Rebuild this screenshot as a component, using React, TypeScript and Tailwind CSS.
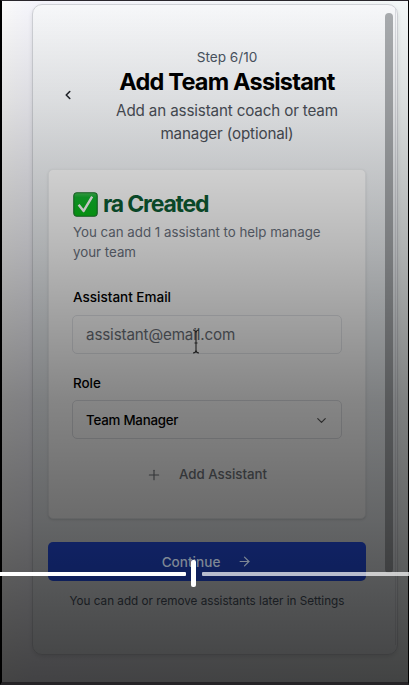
import React from "react";
import { ArrowRight, ChevronDown, ChevronLeft, Plus } from "lucide-react";

function CheckEmoji() {
  return (
    <svg width="25" height="25" viewBox="0 0 24 24" className="shrink-0">
      <defs>
        <linearGradient id="check-fill" x1="0" y1="0" x2="0" y2="1">
          <stop offset="0" stopColor="#45bf55" />
          <stop offset="0.2" stopColor="#12b52e" />
          <stop offset="1" stopColor="#08bd16" />
        </linearGradient>
      </defs>
      <rect x="0.75" y="0.75" width="22.5" height="22.5" rx="3" fill="url(#check-fill)" stroke="#1c7a2b" strokeWidth="1.1" />
      <path d="M5.4 12.2 10.2 18.2 18.4 4.4" fill="none" stroke="#fff" strokeWidth="2.3" strokeLinejoin="round" />
    </svg>
  );
}

function Header() {
  return (
    <header className="flex h-[164px] items-start">
      <div className="flex w-10 justify-center pt-[83px]">
        <ChevronLeft size={14} strokeWidth={2.8} className="text-[#22262b]" />
      </div>
      <div className="flex-1 pt-[42px] text-center">
        <p className="text-[13.6px] leading-5 text-[#4b5563]">Step 6/10</p>
        <h1 className="mt-[-1px] text-[23.5px] leading-8 font-bold tracking-[-0.8px] text-black">Add Team Assistant</h1>
        <p className="mt-px text-[15.2px] leading-[23px] tracking-[-0.15px] text-[#4b5058]">
          Add an assistant coach or team
          <br />
          manager (optional)
        </p>
      </div>
    </header>
  );
}

function AssistantCard() {
  return (
    <section className="h-[350px] rounded-[5px] border border-[#eceef0] bg-white px-[24px] pt-[22px] shadow-sm">
      <h2 className="flex h-6 items-center gap-[5px] text-[23px] font-bold tracking-[-1.2px] text-[#0d5c33]">
        <CheckEmoji />
        <span>ra Created</span>
      </h2>
      <p className="mt-[6px] text-[13.3px] leading-5 text-[#6b7280]">
        You can add 1 assistant to help manage
        <br />
        your team
      </p>
      <div className="mt-[25px] text-[13.5px] leading-5 font-medium text-black">Assistant Email</div>
      <div className="ml-[-1px] mt-2 flex h-[39px] w-[270px] items-center rounded-[5px] border border-[#e5e7eb] px-[13px] pt-[2px] text-[15.2px] tracking-[-0.15px] text-[#6b7078]">
        assistant@email.com
      </div>
      <div className="mt-[18px] pt-px text-[13.4px] leading-5 font-medium text-black">Role</div>
      <div className="ml-[-1px] mt-[7px] flex h-[39px] w-[270px] items-center justify-between rounded-[5px] border border-[#dfe1e5] px-[13px] pt-[2px] text-[13.3px] font-medium tracking-[-0.22px] text-black">
        <span>Team Manager</span>
        <ChevronDown size={15} strokeWidth={1.9} className="mr-[-1px] text-[#555]" />
      </div>
      <div className="mt-4 flex h-[39px] w-[270px] items-center justify-center gap-[17px] pt-px pr-[3px] text-[13.3px] font-medium text-[#73777d]">
        <Plus size={16} strokeWidth={1.7} />
        <span>Add Assistant</span>
      </div>
    </section>
  );
}

function VideoScrubber() {
  return (
    <div className="absolute top-[560px] left-0 flex h-[27px] w-[409px] items-center">
      <div className="h-[4px] w-[186px] rounded-r-[1px] bg-white" />
      <div className="ml-[5px] h-[27px] w-[5px] rounded-[2px] bg-white" />
      <div className="ml-[6px] h-[4px] flex-1 rounded-l-[1px] bg-white/70" />
    </div>
  );
}

export default function App() {
  return (
    <div className="relative h-[685px] w-[409px] border-t-[1px] border-r border-b-[3px] border-l-2 border-t-[#29262c] border-r-black border-b-[#262427] border-l-black bg-linear-to-r from-[#fafafa] via-[#f4f4fb] via-8% to-[#f3f7f7] pt-[3px] pl-[30px] font-[Inter,'Liberation_Sans',sans-serif]">
      <div className="flex h-[651px] w-[366px] rounded-[10px] border border-[#d0d2d7] bg-linear-to-b from-[#f7f8fa] via-[#edf1f4] to-[#eff2f5] pl-[15px] shadow-[0_2px_4px_#0000001a]">
        <main className="w-[318px]">
          <Header />
          <AssistantCard />
          <div className="mt-[23px] flex h-[39px] items-center justify-center rounded-[5px] bg-[#2855f8] text-[13.6px] font-medium text-white">
            <div className="relative z-10 flex items-center gap-[17px] pt-px text-[#7e8794]">
              <span>Continue</span>
              <ArrowRight size={15} strokeWidth={1.9} />
            </div>
          </div>
          <p className="mt-3 text-center text-[11.7px] leading-4 whitespace-nowrap text-[#4b5563]">
            You can add or remove assistants later in Settings
          </p>
        </main>
        <div className="mt-2 ml-[19px] h-[560px] w-2 rounded-full bg-[#a9acaf]" />
        <div className="mt-1 ml-[2px] h-[636px] w-px bg-[#d9dbe0]" />
      </div>
      <div className="pointer-events-none absolute inset-0 bg-[linear-gradient(to_bottom,#00000000_0px,#0000001a_100px,#00000030_170px,#00000048_250px,#00000063_330px,#0000007a_400px,#0000008c_480px,#00000094_520px,#000000a8_600px,#000000ba_681px)]" />
      <svg className="absolute top-[328px] left-[189px]" width="10" height="25" viewBox="0 0 10 25" fill="none" stroke="#202020" strokeWidth="1.1">
        <path d="M2 1Q5 1 5 4V21Q5 24 2 24M8 1Q5 1 5 4M5 21Q5 24 8 24M3.5 14H6.5" />
      </svg>
      <div className="absolute top-[-1px] left-[-2px] z-20">
        <VideoScrubber />
      </div>
    </div>
  );
}
